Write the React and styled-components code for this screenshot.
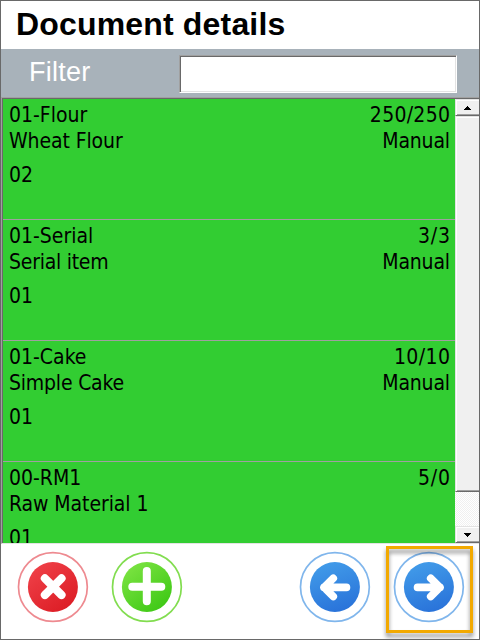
import React from 'react';
import styled, { createGlobalStyle } from 'styled-components';

const GlobalStyle = createGlobalStyle`
  * { box-sizing: border-box; }
  body { margin: 0; background: #fff; }
`;

const Window = styled.main`
  width: 480px;
  height: 640px;
  display: flex;
  flex-direction: column;
  overflow: hidden;
  border: 1px solid #696969;
  background: #fff;
  color: #000;
  font-family: 'Liberation Sans', Arial, sans-serif;
`;

const Title = styled.h1`
  flex: none;
  height: 48px;
  margin: 0;
  padding-left: 15px;
  font-size: 32px;
  line-height: 47px;
  font-weight: 700;
  letter-spacing: 0.17px;
  white-space: nowrap;
`;

const FilterBar = styled.div`
  flex: none;
  height: 48px;
  display: flex;
  align-items: flex-start;
  background: #a8b2ba;
`;

const FilterLabel = styled.label`
  width: 178px;
  padding-left: 28px;
  font-size: 27px;
  line-height: 47px;
  letter-spacing: 0.25px;
  color: #fff;
`;

const FilterInput = styled.input`
  width: 278px;
  height: 38px;
  margin: 6px 0 0;
  padding: 0 6px;
  border: 1px solid;
  border-color: #a0a0a0 #fff #fff #a0a0a0;
  border-radius: 0;
  outline: 0;
  background: #fff;
  box-shadow: inset 1px 1px #696969, inset -1px -1px #e3e3e3;
  font: 24px 'Liberation Sans', sans-serif;
`;

const ListFrame = styled.section`
  flex: none;
  height: 447px;
  display: flex;
  overflow: hidden;
  border: 1px solid;
  border-color: #a0a0a0 transparent #e3e3e3 #a0a0a0;
  border-right: 0;
`;

const Rows = styled.div`
  flex: none;
  width: 453px;
  height: 445px;
  overflow: hidden;
  border-top: 1px solid #696969;
  border-left: 1px solid #696969;
  background: #32cd32;
`;

const Row = styled.article`
  height: 121px;
  padding: 3px 5px 0 6px;
  border-bottom: 1px solid #a0a0a0;
  font-family: 'DejaVu Sans Condensed', 'DejaVu Sans', sans-serif;
  font-stretch: condensed;
  font-size: 21px;
  line-height: 26px;
`;

const Line = styled.div`
  display: flex;
  justify-content: space-between;
  height: 26px;
  margin-top: ${(p) => (p.$gap ? 8 : 0)}px;
  white-space: nowrap;
`;

const Text = styled.span`
  letter-spacing: ${(p) => p.$spacing || 0}px;
  margin-right: ${(p) => -(p.$spacing || 0)}px;
`;

/* The bar is two pixels wider than the frame, which hides its right bevel. */
const ScrollBar = styled.div`
  flex: none;
  width: 26px;
  height: 445px;
  display: flex;
  flex-direction: column;
  border-top: 1px solid #696969;
  background: repeating-conic-gradient(#fff 0 25%, #f0f0f0 0 50%) 0 0 / 2px 2px;
`;

const ScrollPart = styled.div`
  flex: none;
  height: ${(p) => p.$height}px;
  margin-top: ${(p) => (p.$push ? 'auto' : 0)};
  padding-right: 1px;
  display: flex;
  align-items: center;
  justify-content: center;
  background: #f0f0f0;
  border: 1px solid;
  border-color: #e3e3e3 #696969 #696969 #e3e3e3;
  box-shadow: inset 1px 1px #fff, inset -1px -1px #a0a0a0;
`;

const Footer = styled.footer`
  flex: 1;
  display: flex;
  align-items: flex-start;
  justify-content: space-between;
  padding: 7px 14px 0 16px;
`;

const Group = styled.div`
  display: flex;
  gap: 22px;
`;

const IconButton = styled.button`
  position: relative;
  width: 72px;
  height: 72px;
  padding: 0;
  border: 0;
  background: none;

  svg { display: block; }
`;

const Highlight = styled.span`
  position: absolute;
  left: -7px;
  top: -5px;
  width: 87px;
  height: 87px;
  border: 3px solid #f2a900;
  filter: drop-shadow(0 4px 2px rgba(0, 0, 0, 0.45));
`;

const PALETTE = {
  red: ['#ef4048', '#dc1c24', '#ee8a90'],
  green: ['#7ce342', '#3cc814', '#82dd50'],
  blue: ['#4099e8', '#2a74da', '#80b6ec'],
};

const GLYPHS = {
  close: ['M27.900 27.400L44.500 44M44.500 27.400L27.900 44', 8.2],
  plus: ['M35.800 20V50.300M21.300 35.700H50.300', 8],
  back: ['M47.500 36.400H25M34.300 27.300L25 36.400L34.300 45.500', 7.6],
  next: ['M24.500 36.400H47M37.700 27.300L47 36.400L37.700 45.500', 7.6],
};

function RoundIcon({ tone, glyph }) {
  const [from, to, ring] = PALETTE[tone];
  const [d, weight] = GLYPHS[glyph];
  const id = `fill-${glyph}`;
  return (
    <svg width="72" height="72" viewBox="0 0 72 72">
      <defs>
        <linearGradient id={id} x1={tone === 'blue' ? '.35' : '.15'} y1="0.05" x2={tone === 'blue' ? '.65' : '.85'} y2="0.95">
          <stop stopColor={from} />
          <stop offset="1" stopColor={to} />
        </linearGradient>
      </defs>
      <circle cx="35.900" cy="36" r="34.400" fill="none" stroke={ring} strokeWidth="1.700" />
      <circle cx="35.900" cy="36" r="25" fill={`url(#${id})`} />
      <path d={d} fill="none" stroke="#fff" strokeWidth={weight} strokeLinecap="round" strokeLinejoin="round" />
    </svg>
  );
}

const Arrow = ({ down }) => (
  <svg width="7" height="4" viewBox="0 0 7 4" shapeRendering="crispEdges">
    <path d={down ? 'M0 0h7v1H0zM1 1h5v1H1zM2 2h3v1H2zM3 3h1v1H3z' : 'M3 0h1v1H3zM2 1h3v1H2zM1 2h5v1H1zM0 3h7v1H0z'} />
  </svg>
);

const ITEMS = [
  { code: '01-Flour', count: '250/250', name: 'Wheat Flour', mode: 'Manual', line: '02', nameSpacing: -0.1, countSpacing: 0.28 },
  { code: '01-Serial', count: '3/3', name: 'Serial item', mode: 'Manual', line: '01', nameSpacing: -0.25, countSpacing: 0.8 },
  { code: '01-Cake', count: '10/10', name: 'Simple Cake', mode: 'Manual', line: '01', nameSpacing: -0.2, countSpacing: 0.4 },
  { code: '00-RM1', count: '5/0', name: 'Raw Material 1', mode: '', line: '01', nameSpacing: -0.08, countSpacing: 0.8 },
];

export default function App() {
  return (
    <>
      <GlobalStyle />
      <Window>
        <Title>Document details</Title>
        <FilterBar>
          <FilterLabel htmlFor="filter">Filter</FilterLabel>
          <FilterInput id="filter" />
        </FilterBar>
        <ListFrame>
          <Rows>
            {ITEMS.map((item) => (
              <Row key={item.code}>
                <Line>
                  <Text>{item.code}</Text>
                  <Text $spacing={item.countSpacing}>{item.count}</Text>
                </Line>
                <Line>
                  <Text $spacing={item.nameSpacing}>{item.name}</Text>
                  <Text $spacing={-0.2}>{item.mode}</Text>
                </Line>
                <Line $gap><Text>{item.line}</Text></Line>
              </Row>
            ))}
          </Rows>
          <ScrollBar>
            <ScrollPart $height={17}><Arrow /></ScrollPart>
            <ScrollPart $height={376} />
            <ScrollPart $height={17} $push><Arrow down /></ScrollPart>
          </ScrollBar>
        </ListFrame>
        <Footer>
          <Group>
            <IconButton aria-label="Cancel"><RoundIcon tone="red" glyph="close" /></IconButton>
            <IconButton aria-label="Add"><RoundIcon tone="green" glyph="plus" /></IconButton>
          </Group>
          <Group>
            <IconButton aria-label="Back"><RoundIcon tone="blue" glyph="back" /></IconButton>
            <IconButton aria-label="Next">
              <RoundIcon tone="blue" glyph="next" />
              <Highlight />
            </IconButton>
          </Group>
        </Footer>
      </Window>
    </>
  );
}
